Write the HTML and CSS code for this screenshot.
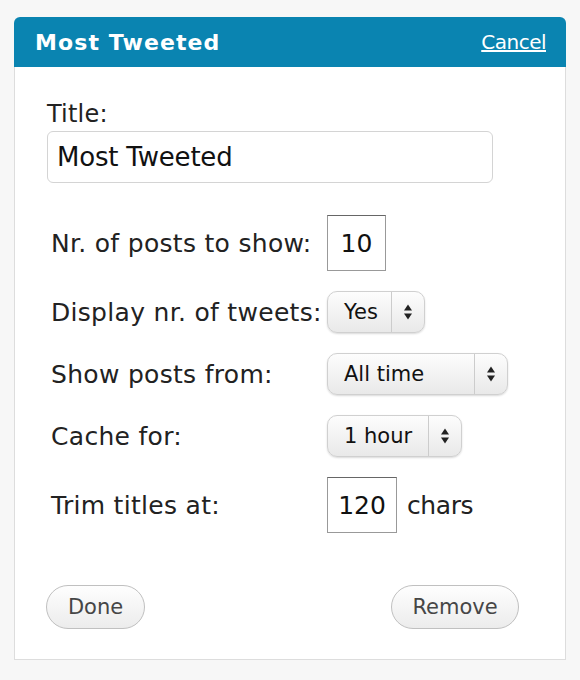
FILE: index.html
```html
<!DOCTYPE html>
<html lang="en">
<head>
    <meta charset="UTF-8">
    <title>Most Tweeted - Widget</title>
    <link rel="stylesheet" href="styles.css">
</head>
<body>

    <div class="widget">
        <div class="widget-top">
            <span class="widget-title">Most Tweeted</span>
            <a href="#" class="cancel">Cancel</a>
        </div>

        <div class="widget-inside">
            <label class="title-label" for="title">Title:</label>
            <input type="text" id="title" class="title-input" value="Most Tweeted">

            <div class="options">
                <span class="opt-label">Nr. of posts to show:</span>
                <span><input type="text" class="num num-small" value="10"></span>

                <span class="opt-label">Display nr. of tweets:</span>
                <span>
                    <span class="select">
                        <span class="select-text sel-yes">Yes</span>
                        <span class="select-arrows">
                            <svg width="8" height="16" viewBox="0 0 8 16"><polygon points="0,6.5 4,0.5 8,6.5"/><polygon points="0,9.5 4,15.5 8,9.5"/></svg>
                        </span>
                    </span>
                </span>

                <span class="opt-label">Show posts from:</span>
                <span>
                    <span class="select">
                        <span class="select-text sel-time">All time</span>
                        <span class="select-arrows">
                            <svg width="8" height="16" viewBox="0 0 8 16"><polygon points="0,6.5 4,0.5 8,6.5"/><polygon points="0,9.5 4,15.5 8,9.5"/></svg>
                        </span>
                    </span>
                </span>

                <span class="opt-label">Cache for:</span>
                <span>
                    <span class="select">
                        <span class="select-text sel-cache">1 hour</span>
                        <span class="select-arrows">
                            <svg width="8" height="16" viewBox="0 0 8 16"><polygon points="0,6.5 4,0.5 8,6.5"/><polygon points="0,9.5 4,15.5 8,9.5"/></svg>
                        </span>
                    </span>
                </span>

                <span class="opt-label">Trim titles at:</span>
                <span class="trim">
                    <input type="text" class="num num-wide" value="120">
                    <span class="chars">chars</span>
                </span>
            </div>

            <div class="actions">
                <button class="btn">Done</button>
                <button class="btn btn-remove">Remove</button>
            </div>
        </div>
    </div>

</body>
</html>
```

FILE: styles.css
```css
body {
    margin: 0;
    background-color: #f7f7f7;
    font-family: "DejaVu Sans", Verdana, sans-serif;
    color: #222;
}

.widget {
    margin: 17px 14px 0 14px;
    width: 552px;
}

.widget-top {
    height: 50px;
    background-color: #0a84b1;
    border-radius: 6px 6px 0 0;
    display: flex;
    align-items: center;
    justify-content: space-between;
    padding: 0 20px 0 21px;
}

.widget-title {
    color: #fff;
    font-weight: bold;
    font-size: 22px;
    letter-spacing: 1.1px;
}

.cancel {
    color: #fff;
    font-size: 20px;
    text-decoration: underline;
    letter-spacing: -0.5px;
}

.widget-inside {
    background-color: #fff;
    border: 1px solid #ddd;
    border-top: none;
    padding: 33px 46px 30px 32px;
    height: 593px;
    box-sizing: border-box;
}

.title-label {
    display: block;
    font-size: 24px;
    letter-spacing: 0.2px;
    line-height: 29px;
    margin-bottom: 2px;
}

.title-input {
    display: block;
    width: 446px;
    height: 52px;
    box-sizing: border-box;
    border: 1px solid #d4d4d4;
    border-radius: 6px;
    padding: 0 9px;
    font-family: "DejaVu Sans", Verdana, sans-serif;
    font-size: 26px;
    color: #111;
    letter-spacing: -0.2px;
}

.options {
    display: grid;
    grid-template-columns: 276px auto;
    row-gap: 20px;
    align-items: center;
    margin-top: 32px;
    padding-left: 4px;
}

.opt-label {
    font-size: 25px;
    letter-spacing: 0.3px;
}

.num {
    display: block;
    height: 56px;
    box-sizing: border-box;
    border: 1px solid #999;
    border-top-color: #666;
    padding: 0;
    text-align: center;
    font-family: "DejaVu Sans", Verdana, sans-serif;
    font-size: 25px;
    color: #111;
}

.num-small {
    width: 59px;
}

.num-wide {
    width: 70px;
}

.trim {
    display: flex;
    align-items: center;
    gap: 10px;
}

.chars {
    font-size: 25px;
    letter-spacing: -0.4px;
}

.select {
    display: inline-flex;
    align-items: stretch;
    height: 42px;
    box-sizing: border-box;
    border: 1px solid #d0d0d0;
    border-radius: 10px;
    background: linear-gradient(#fdfdfd, #e9e9e9);
    box-shadow: 0 1px 2px rgba(0,0,0,0.15);
    font-size: 21px;
    color: #111;
    vertical-align: middle;
}

.select-text {
    display: flex;
    align-items: center;
    padding-left: 16px;
    border-right: 1px solid #ccc;
}

.sel-yes {
    width: 47px;
}

.sel-time {
    width: 130px;
}

.sel-cache {
    width: 84px;
}

.select-arrows {
    width: 32px;
    display: flex;
    align-items: center;
    justify-content: center;
}

.select-arrows svg {
    fill: #222;
}

.actions {
    display: flex;
    justify-content: space-between;
    margin-top: 52px;
    margin-left: -1px;
}

.btn {
    height: 44px;
    width: 99px;
    border: 1px solid #c0c0c0;
    border-radius: 22px;
    background: linear-gradient(#fefefe, #ececec);
    font-family: "DejaVu Sans", Verdana, sans-serif;
    font-size: 21px;
    color: #464646;
    cursor: pointer;
}

.btn-remove {
    width: 128px;
}
```
